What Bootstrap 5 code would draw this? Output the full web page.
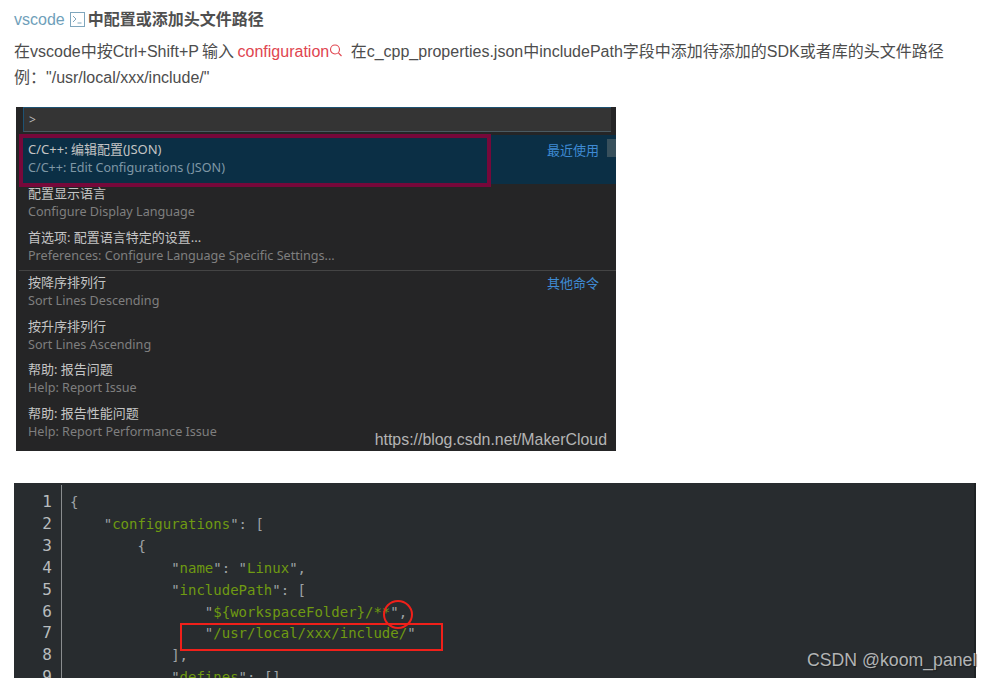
<!DOCTYPE html>
<html lang="zh-CN">
<head>
<meta charset="utf-8">
<title>vscode</title>
<link href="https://cdn.jsdelivr.net/npm/bootstrap@5.3.0/dist/css/bootstrap.min.css" rel="stylesheet">
<style>
html,body{overflow:hidden;height:678px;background:#fff}
body{font-family:"Liberation Sans","Noto Sans CJK SC",sans-serif;font-size:16px;color:#4d4d4d}
.page-wrap{padding:8px 30px 0 14px}
.art-head{font-size:16px;line-height:24px;margin:0;font-weight:700;color:#4f4f4f}
.art-link{color:#6f9fba;font-weight:400}
.head-ico{vertical-align:-2px;margin:0 3px 0 5px}
.art-text{line-height:26px;margin:7px 0 0;word-spacing:-1px}
.art-red{color:#e0454f}
.ico{vertical-align:-1px}
.shot-vs{width:600px;height:344px;margin:16px 0 0 2px;background:#252526;font-family:"Noto Sans","Noto Sans CJK SC",sans-serif;overflow:hidden}
.vs-input{height:25px;margin:0 5px 3px 7px;background:#343434;border-top:1px solid #1d5273;border-left:1px solid #1d5273;border-bottom:1px solid #4a5a62;color:#bbb;font-size:12px;line-height:24px;padding-left:5px}
.vs-row{margin-left:3px;padding:1px 17px 0 9px;height:44px}
.vs-sel{height:49px;padding-top:6px;background:#0b2f45}
.vs-r3{height:42px}
.vs-low{padding-top:3px;height:43.5px}
.vs-low .vs-s{line-height:17px}
.vs-sep{margin-left:3px;height:1px;background:#444}
.vs-t{font-size:13px;line-height:16px;margin-bottom:2px;color:#c4c4c4}
.vs-s{font-size:12.6px;line-height:18px;color:#7f7f7f}
.vs-sel .vs-s{color:#7f97a5}
.vs-g{font-size:13px;line-height:18px;color:#3f8bd4}
.vs-box{left:3px;top:27px;width:472px;height:53px;border:4px solid #76083a}
.vs-thumb{left:591px;top:32px;width:9px;height:18px;background:#38505c}
.vs-mark{right:9px;bottom:1px;font-family:"Liberation Sans",sans-serif;font-size:15.9px;line-height:20px;color:#b4b4b4}
.shot-code{height:195px;margin-top:32px;width:962px;background:#282c2f;border-right:2px solid #1e2224}
.gut{width:48px;margin-top:2px;padding:6px 9px 0 0;border-right:1px solid #8a8d8f;text-align:right;font-family:"DejaVu Sans Mono",monospace;font-size:16px;line-height:21.9px;color:#b8bcbe}
.code-col{padding:7px 0 0 8px;margin:2px 0 0;font-family:"DejaVu Sans Mono",monospace;font-size:14px;line-height:21.9px;color:#9ea3a6;white-space:pre;overflow:visible}
.tok{color:#6f9a12}
.ann-rect{left:166px;top:140px;width:263px;height:28px;border:2px solid #f0201a}
.ann-circ{left:369px;top:117px;width:30px;height:29px;border:2px solid #f0201a;border-radius:50%}
.code-mark{left:793px;top:165px;font-family:"Liberation Sans",sans-serif;font-size:17.7px;line-height:24px;color:#b2b4b5;white-space:nowrap;text-shadow:1px 1px 1px #1c1f21}
</style>
</head>
<body>
<div class="page-wrap">
  <h3 class="art-head"><span class="art-link">vscode</span><svg class="head-ico" width="15" height="15" viewBox="0 0 15 15" fill="none" stroke="#7fa6bd" stroke-width="1"><rect x="0.5" y="0.5" width="14" height="14"/><path d="M3 4l3 3-3 3M7.5 11h4"/></svg>中配置或添加头文件路径</h3>
  <p class="art-text">在vscode中按Ctrl+Shift+P 输入 <span class="art-red">configuration</span><svg class="ico me-1" width="14" height="14" viewBox="0 0 14 14" fill="none" stroke="#e0454f" stroke-width="1.1"><circle cx="6" cy="5.5" r="4.5"/><path d="M9.5 9l3 3"/></svg> 在c_cpp_properties.json中includePath字段中添加待添加的SDK或者库的头文件路径<br>例&#xFF1A;"/usr/local/xxx/include/"</p>

  <div class="shot-vs position-relative">
    <div class="vs-input">&gt;</div>
    <div class="vs-row vs-sel d-flex justify-content-between">
      <div><div class="vs-t">C/C++: 编辑配置(JSON)</div><div class="vs-s">C/C++: Edit Configurations (JSON)</div></div>
      <div class="vs-g">最近使用</div>
    </div>
    <div class="vs-row"><div class="vs-t">配置显示语言</div><div class="vs-s">Configure Display Language</div></div>
    <div class="vs-row vs-r3"><div class="vs-t">首选项: 配置语言特定的设置...</div><div class="vs-s">Preferences: Configure Language Specific Settings...</div></div>
    <div class="vs-sep"></div>
    <div class="vs-row vs-low d-flex justify-content-between">
      <div><div class="vs-t">按降序排列行</div><div class="vs-s">Sort Lines Descending</div></div>
      <div class="vs-g">其他命令</div>
    </div>
    <div class="vs-row vs-low"><div class="vs-t">按升序排列行</div><div class="vs-s">Sort Lines Ascending</div></div>
    <div class="vs-row vs-low"><div class="vs-t">帮助: 报告问题</div><div class="vs-s">Help: Report Issue</div></div>
    <div class="vs-row vs-low"><div class="vs-t">帮助: 报告性能问题</div><div class="vs-s">Help: Report Performance Issue</div></div>
    <div class="vs-box position-absolute"></div>
    <div class="vs-thumb position-absolute"></div>
    <div class="vs-mark position-absolute">https://blog.csdn.net/MakerCloud</div>
  </div>

  <div class="shot-code position-relative d-flex">
    <div class="gut">1<br>2<br>3<br>4<br>5<br>6<br>7<br>8<br>9</div>
    <pre class="code-col">{
    "<span class="tok">configurations</span>": [
        {
            "<span class="tok">name</span>": "<span class="tok">Linux</span>",
            "<span class="tok">includePath</span>": [
                "<span class="tok">${workspaceFolder}/**</span>",
                "<span class="tok">/usr/local/xxx/include/</span>"
            ],
            "<span class="tok">defines</span>": [],</pre>
    <div class="ann-rect position-absolute"></div>
    <div class="ann-circ position-absolute"></div>
    <div class="code-mark position-absolute">CSDN @koom_panel</div>
  </div>
</div>
</body>
</html>
